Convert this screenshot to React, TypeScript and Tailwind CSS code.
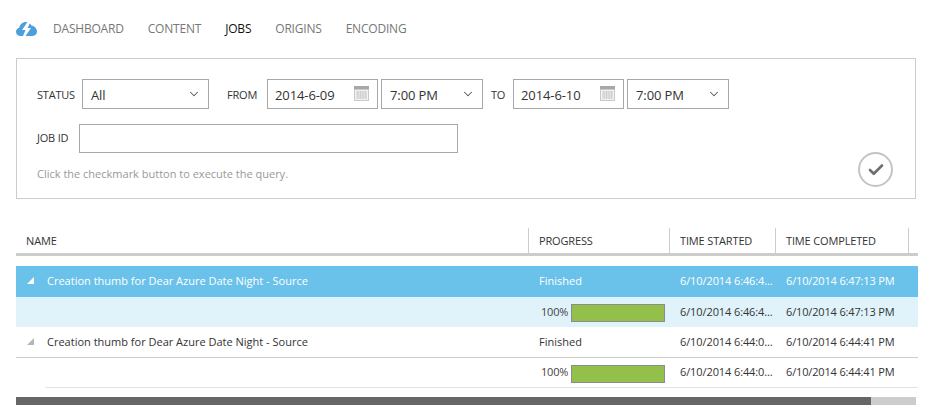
import { ChevronDown, Check } from "lucide-react";

const navItems = ["DASHBOARD", "CONTENT", "JOBS", "ORIGINS", "ENCODING"];

const font = "font-['Open_Sans',sans-serif]";
const rowGrid = "grid grid-cols-[512px_141px_106px_133px_8px] items-center";

const jobs = [
  { started: "6/10/2014 6:46:4...", completed: "6/10/2014 6:47:13 PM", selected: true },
  { started: "6/10/2014 6:44:0...", completed: "6/10/2014 6:44:41 PM", selected: false },
];

function Logo() {
  return (
    <svg width="21" height="14" viewBox="0 0 21 14" className="shrink-0">
      <path
        d="M4.500 14C2 14 0 12.200 0 9.800 0 7.800 1.400 6.200 3.300 5.800 3.800 2.500 6.500 0 9.800 0c2.500 0 4.600 1.400 5.600 3.500C18.500 4 21 6.500 21 9.600 21 12.200 19 14 16.500 14Z"
        fill="#4a9fdc"
      />
      <path d="M11.500 0 6 8h3.500L7 14h2.500l5.500-8h-3.500L14.500 0Z" fill="#fff" />
    </svg>
  );
}

function CalendarIcon() {
  return (
    <svg width="15" height="15" viewBox="0 0 15 15" className="mt-[-2px] shrink-0">
      <rect width="15" height="15" fill="#c9c9c9" />
      <rect x="0" y="0" width="15" height="3" fill="#a8a8a8" />
      <rect x="1" y="4" width="13" height="10" fill="#f2f2f2" />
      <path
        d="M2 6h11M2 8h11M2 10h11M2 12h11M4 5v8M6.500 5v8M9 5v8M11.500 5v8"
        stroke="#cfcfcf"
        strokeWidth="1"
      />
    </svg>
  );
}

function Select({ value, width }: { value: string; width: string }) {
  return (
    <div className={`flex h-[30px] items-center justify-between border border-[#a8a8a8] pl-2 pr-[7px] ${width}`}>
      <span className="pt-[3px] text-[13px] tracking-[-0.1px] text-[#333]">{value}</span>
      <ChevronDown className="h-[14px] w-[14px] text-[#555]" strokeWidth={1.750} />
    </div>
  );
}

function DateInput({ value }: { value: string }) {
  return (
    <div className="flex h-[30px] w-[111px] items-center justify-between border border-[#a8a8a8] pl-[7px] pr-[8px]">
      <span className="pt-[3px] text-[13px] tracking-[-0.1px] text-[#333]">{value}</span>
      <CalendarIcon />
    </div>
  );
}

function Triangle({ color }: { color: string }) {
  return (
    <svg width="7" height="7" viewBox="0 0 7 7" className="mt-[-2px]">
      <polygon points="7,0 7,7 0,7" fill={color} />
    </svg>
  );
}

function ProgressBar() {
  return <div className="mt-[2px] h-[18px] w-[94px] border border-[#8c8c8c] bg-[#92c04a]" />;
}

export default function App() {
  return (
    <div className={`h-[418px] w-[934px] overflow-hidden bg-white px-4 ${font}`}>
      {/* Nav */}
      <nav className="flex h-[58px] items-center">
        <Logo />
        <div className="ml-4 flex gap-6 text-[12px] tracking-[-0.2px]">
          {navItems.map((item) => (
            <span key={item} className={item === "JOBS" ? "text-[#111]" : "text-[#777]"}>
              {item}
            </span>
          ))}
        </div>
      </nav>

      {/* Query panel */}
      <section className="relative h-[141px] w-[900px] border border-[#ccc] pl-5 pt-5">
        <div className="flex items-center text-[11px] tracking-[-0.2px] text-[#333]">
          <span className="w-[45px] pt-[2px]">STATUS</span>
          <Select value="All" width="w-[127px]" />
          <span className="ml-[18px] w-[40px] pt-[2px]">FROM</span>
          <DateInput value="2014-6-09" />
          <div className="ml-[3px]">
            <Select value="7:00 PM" width="w-[102px]" />
          </div>
          <span className="ml-2 w-[22px] pt-[2px]">TO</span>
          <DateInput value="2014-6-10" />
          <div className="ml-[3px]">
            <Select value="7:00 PM" width="w-[102px]" />
          </div>
        </div>
        <div className="mt-[15px] flex items-center text-[11px] tracking-[-0.2px] text-[#333]">
          <span className="w-[42px]">JOB ID</span>
          <div className="h-[29px] w-[379px] border border-[#a8a8a8]" />
        </div>
        <p className="mt-[13px] text-[11px] text-[#999]">
          Click the checkmark button to execute the query.
        </p>
        <button className="absolute right-[22px] bottom-[11px] flex h-[35px] w-[35px] items-center justify-center rounded-full border-2 border-[#c4c4c4]">
          <Check className="h-[18px] w-[18px] text-[#6f6f6f]" strokeWidth={3.500} />
        </button>
      </section>

      {/* Table header */}
      <div className={`${rowGrid} mt-[29px] box-content h-[25px] border-b-[3px] border-[#ccc] text-[11px] tracking-[-0.15px] text-[#333]`}>
        <span className="pl-[10px] pt-[2px]">NAME</span>
        {["PROGRESS", "TIME STARTED", "TIME COMPLETED"].map((col) => (
          <span key={col} className="flex h-[25px] items-center border-l border-[#ccc] pl-[10px] pt-[2px]">
            {col}
          </span>
        ))}
        <span className="h-[25px] border-l border-[#ccc]" />
      </div>

      {/* Rows */}
      <div className="mt-[10px] text-[11px]">
        {jobs.map((job) => (
          <div key={job.started}>
            <div
              className={`${rowGrid} h-[31px] ${
                job.selected ? "bg-[#6ac2ea] text-white" : "border-b border-[#ccc] text-[#333]"
              }`}
            >
              <div className="flex items-center pl-[11px]">
                <Triangle color={job.selected ? "#ffffff" : "#b5b5b5"} />
                <span className="ml-[13px]">Creation thumb for Dear Azure Date Night - Source</span>
              </div>
              <span className="pl-[11px]">Finished</span>
              <span className="pl-[11px] tracking-[-0.1px]">{job.started}</span>
              <span className="pl-[11px] tracking-[-0.15px]">{job.completed}</span>
            </div>
            <div className={`${job.selected ? "bg-[#e0f3fb]" : ""} h-[30px] text-[#333]`}>
              <div className={`${rowGrid} h-full ${job.selected ? "" : "ml-[29px] grid-cols-[483px_141px_106px_133px_8px]! border-b border-[#e3e3e3]"}`}>
                <span />
                <div className="flex items-center pl-[13px]">
                  <span className="w-[30px] tracking-[-0.2px] text-[#444]">100%</span>
                  <ProgressBar />
                </div>
                <span className="pl-[11px] tracking-[-0.1px]">{job.started}</span>
                <span className="pl-[11px] tracking-[-0.15px]">{job.completed}</span>
              </div>
            </div>
          </div>
        ))}
      </div>

      {/* Scrollbar */}
      <div className="mt-[9px] flex h-[8px] w-[900px] bg-[#ccc]">
        <div className="h-full w-[855px] bg-[#666]" />
      </div>
    </div>
  );
}
